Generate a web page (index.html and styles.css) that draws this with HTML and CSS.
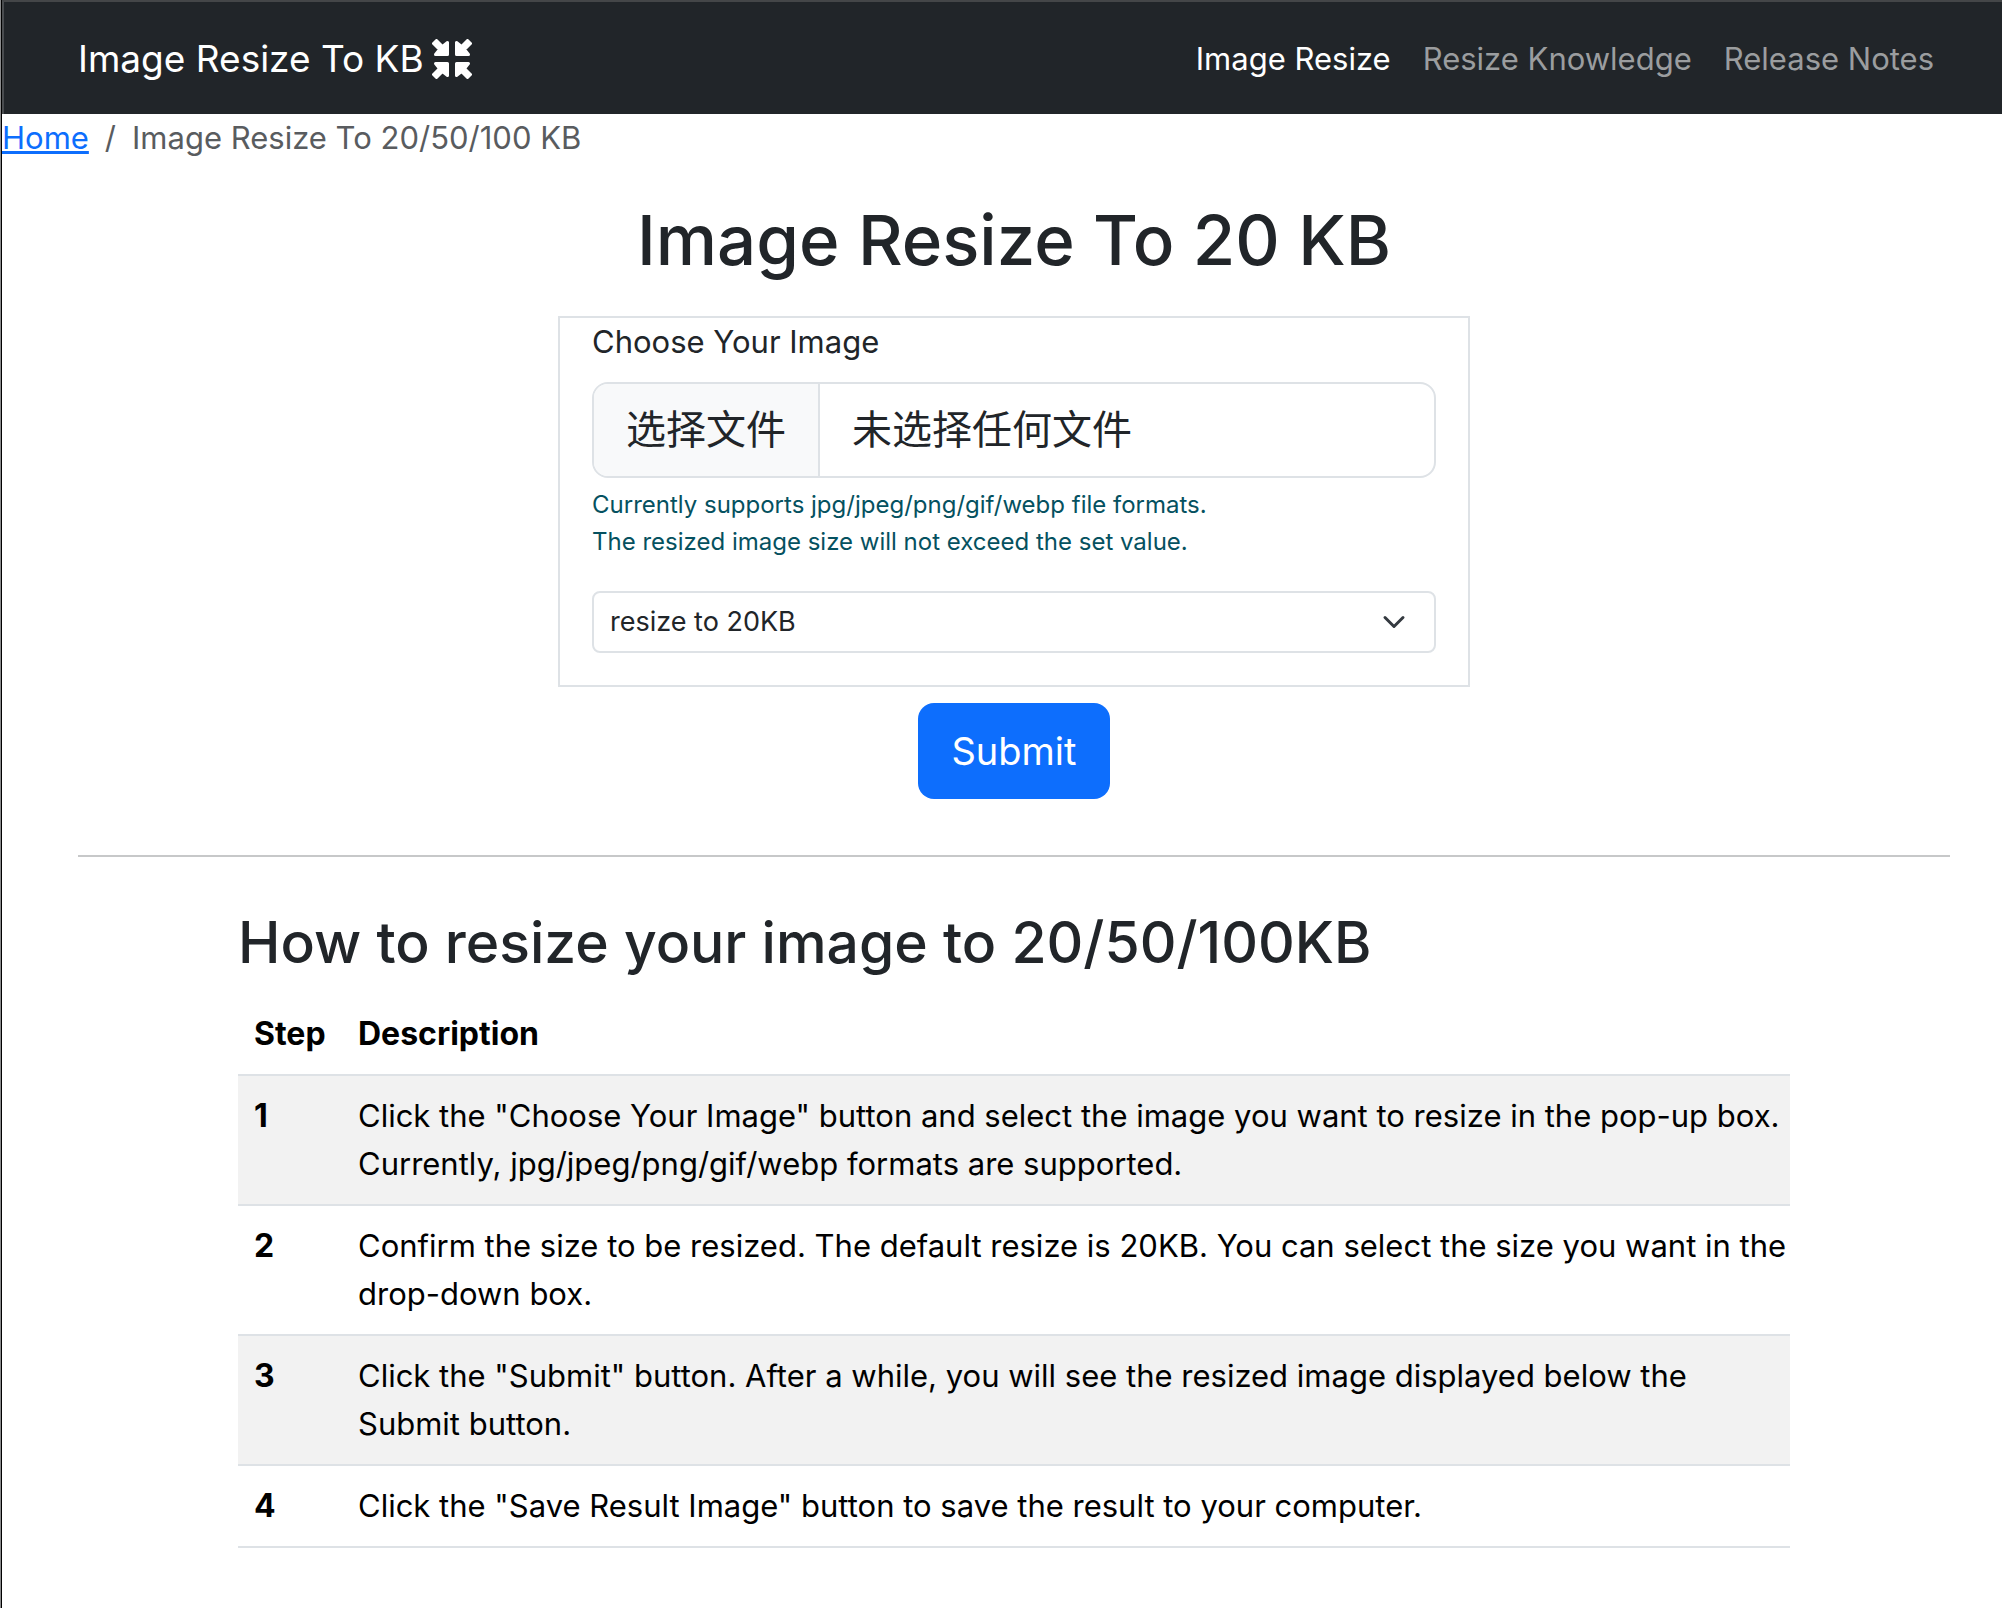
FILE: index.html
```html
<!DOCTYPE html>
<html lang="en">
<head>
<meta charset="utf-8">
<meta name="viewport" content="width=device-width, initial-scale=1">
<title>Image Resize To 20/50/100 KB</title>
<link rel="stylesheet" href="styles.css">
</head>
<body>
<header class="navbar">
  <a class="brand" href="#">Image Resize To KB
    <svg class="brand-icon" viewBox="0 0 40 40" aria-hidden="true">
      <g id="arrow" fill="currentColor" stroke="currentColor" stroke-width="3" stroke-linejoin="round">
        <path d="M1.500 4.500 4.500 1.500 10.500 7.500 15.500 3.500V15.500H3.500L7.500 10.500Z"/>
      </g>
      <use href="#arrow" transform="matrix(-1 0 0 1 40 0)"/>
      <use href="#arrow" transform="matrix(1 0 0 -1 0 40)"/>
      <use href="#arrow" transform="matrix(-1 0 0 -1 40 40)"/>
    </svg>
  </a>
  <nav class="nav-links">
    <a class="nav-link active" href="#">Image Resize</a>
    <a class="nav-link" href="#">Resize Knowledge</a>
    <a class="nav-link" href="#">Release Notes</a>
  </nav>
</header>

<nav class="breadcrumb" aria-label="breadcrumb">
  <a href="#">Home</a>
  <span>/</span>
  <span>Image Resize To 20/50/100 KB</span>
</nav>

<main class="content">
  <h1>Image Resize To 20 KB</h1>
  <form class="resize-form">
    <div class="card">
      <label class="field-label" for="image">Choose Your Image</label>
      <div class="file-field">
        <span class="file-button">选择文件</span>
        <span class="file-name">未选择任何文件</span>
        <input class="file-input" type="file" id="image">
      </div>
      <p class="help">Currently supports jpg/jpeg/png/gif/webp file formats.<br>The resized image size will not exceed the set value.</p>
      <div class="select-field">
        <select class="select" aria-label="Target size">
          <option>resize to 20KB</option>
          <option>resize to 50KB</option>
          <option>resize to 100KB</option>
        </select>
        <svg class="chevron" viewBox="0 0 16 16" aria-hidden="true"><path d="m2 5 6 6 6-6" fill="none" stroke="#343a40" stroke-width="2" stroke-linecap="round" stroke-linejoin="round"/></svg>
      </div>
    </div>
    <button class="submit" type="button">Submit</button>
  </form>

  <hr>

  <section class="guide">
    <h2>How to resize your image to 20/50/100KB</h2>
    <table class="steps">
      <thead>
        <tr><th scope="col" class="step">Step</th><th scope="col">Description</th></tr>
      </thead>
      <tbody>
        <tr><th scope="row">1</th><td>Click the "Choose Your Image" button and select the image you want to resize in the pop-up box. Currently, jpg/jpeg/png/gif/webp formats are supported.</td></tr>
        <tr><th scope="row">2</th><td>Confirm the size to be resized. The default resize is 20KB. You can select the size you want in the drop-down box.</td></tr>
        <tr><th scope="row">3</th><td>Click the "Submit" button. After a while, you will see the resized image displayed below the Submit button.</td></tr>
        <tr><th scope="row">4</th><td>Click the "Save Result Image" button to save the result to your computer.</td></tr>
      </tbody>
    </table>
  </section>
</main>
</body>
</html>
```
FILE: styles.css
```css
* { box-sizing: border-box; }

html {
  min-height: 100%;
  border-left: 1px solid #8b8c8d;
}

body {
  margin: 0;
  min-height: 100vh;
  border-left: 1px solid #000;
  background: #fff;
  color: #212529;
  font: 400 31px/48px Inter, "Noto Sans CJK SC", sans-serif;
}

.navbar {
  display: flex;
  align-items: center;
  justify-content: space-between;
  padding: 15px 68px 13px 74px;
  border-top: 2px solid #444648;
  border-left: 2px solid #494c4f;
  background: #212529;
}

.brand {
  display: flex;
  align-items: center;
  gap: 8px;
  color: #fff;
  font-size: 37px;
  line-height: 60px;
  text-decoration: none;
}

.brand-icon { width: 40px; height: 40px; }

.nav-links {
  display: flex;
  gap: 32px;
  padding: 18px 0;
}

.nav-link { color: #9b9d9f; text-decoration: none; }
.nav-link.active { color: #fff; }

.breadcrumb {
  display: flex;
  gap: 16px;
  color: #595c5f;
}

.breadcrumb a { color: #0d6efd; }

.content { padding: 0 52px 60px 76px; }

h1, h2 { margin: 0; font-weight: 500; }

h1 {
  margin: 30px 0 28px;
  font-size: 69px;
  line-height: 96px;
  text-align: center;
}

.resize-form {
  display: flex;
  flex-direction: column;
  align-items: center;
  gap: 16px;
}

.card {
  width: 912px;
  max-width: 100%;
  padding: 0 32px 32px;
  border: 2px solid #dee2e6;
}

.field-label { display: block; margin-bottom: 16px; }

.file-field {
  position: relative;
  display: flex;
  height: 96px;
  overflow: hidden;
  border: 2px solid #dee2e6;
  border-radius: 16px;
  font-size: 40px;
  line-height: 92px;
}

.file-button {
  padding: 0 32px;
  border-right: 2px solid #dee2e6;
  background: #f8f9fa;
}

.file-name { padding: 0 32px; }

.file-input {
  position: absolute;
  inset: 0;
  width: 100%;
  height: 100%;
  opacity: 0;
}

.help {
  margin: 8px 0 31px;
  color: #055160;
  font-size: 24px;
  line-height: 37px;
}

.select-field { display: grid; align-items: center; }

.select {
  grid-area: 1 / 1;
  width: 100%;
  height: 62px;
  padding: 0 16px;
  border: 2px solid #dee2e6;
  border-radius: 8px;
  appearance: none;
  background: #fff;
  color: inherit;
  font: inherit;
  font-size: 27px;
}

.chevron {
  grid-area: 1 / 1;
  justify-self: end;
  width: 24px;
  height: 24px;
  margin-right: 30px;
  pointer-events: none;
}

.submit {
  height: 96px;
  padding: 0 33px;
  border: 0;
  border-radius: 16px;
  background: #0d6efd;
  color: #fff;
  font: inherit;
  font-size: 38px;
}

hr {
  margin: 56px 0 48px;
  border: 0;
  border-top: 2px solid #c7c8c9;
}

.guide { margin: 0 160px; }

h2 {
  margin-bottom: 13px;
  font-size: 57px;
  line-height: 76px;
}

.steps {
  width: 100%;
  border-collapse: separate;
  border-spacing: 0;
  color: #000;
}

.steps th, .steps td {
  padding: 16px;
  border-bottom: 2px solid #dee2e6;
  text-align: left;
  vertical-align: top;
}

.steps th { font-size: 32px; font-weight: 700; }
.steps td { padding-right: 0; }
.steps .step { width: 104px; }
.steps tbody tr:nth-child(odd) { background: #f2f2f2; }
```
